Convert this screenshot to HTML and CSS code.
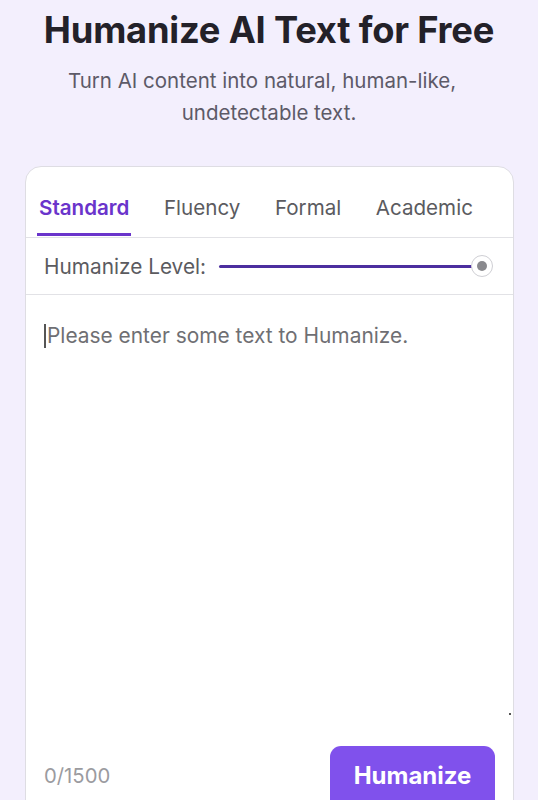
FILE: index.html
```html
<!DOCTYPE html>
<html>
<head>
<meta charset="utf-8">
<link rel="stylesheet" href="styles.css">
</head>
<body>
<header class="hero">
  <h1 class="title">Humanize AI Text for Free</h1>
  <p class="subtitle"><span class="sub-line">Turn AI content into natural, human-like,</span> undetectable text.</p>
</header>
<section class="card">
  <nav class="tabs">
    <span class="tab active">Standard</span>
    <span class="tab">Fluency</span>
    <span class="tab">Formal</span>
    <span class="tab">Academic</span>
  </nav>
  <div class="level">
    <span class="level-label">Humanize Level:</span>
    <div class="slider">
      <div class="track"></div>
      <div class="thumb"><div class="thumb-dot"></div></div>
    </div>
  </div>
  <div class="editor">
    <div class="placeholder"><span class="caret"></span>Please enter some text to Humanize.</div>
    <span class="resize-dot"></span>
  </div>
  <div class="footer">
    <span class="count">0/1500</span>
    <button class="btn">Humanize</button>
  </div>
</section>
</body>
</html>
```
FILE: styles.css
```css
html, body {
  margin: 0;
  padding: 0;
  background: #f3effd;
  font-family: Inter, "Noto Sans", sans-serif;
  height: 800px;
  overflow: hidden;
}
.hero {
  text-align: center;
  padding-top: 8px;
}
.title {
  margin: 0;
  font-size: 36.3px;
  font-weight: 700;
  color: #232129;
  line-height: 44px;
  letter-spacing: -0.2px;
}
.subtitle {
  margin: 13px auto 0;
  width: 430px;
  font-size: 20.5px;
  line-height: 32px;
  color: #5d5a68;
}
.sub-line {
  padding-right: 14px;
}
.card {
  margin: 37px 24px 0 25px;
  background: #fff;
  border: 1px solid #dedde3;
  border-radius: 16px;
  height: 700px;
  display: flex;
  flex-direction: column;
}
.tabs {
  display: flex;
  gap: 30.5px;
  padding: 28px 0 0 11px;
  border-bottom: 1px solid #e2e2e6;
}
.tab {
  font-size: 20.6px;
  line-height: 25px;
  color: #5b5b5f;
  padding: 0 2px 17px;
}
.tab.active {
  color: #6a34cb;
  font-weight: 600;
  border-bottom: 3px solid #6a34cb;
  padding-bottom: 13px;
  margin-bottom: 1px;
}
.level {
  display: flex;
  align-items: center;
  height: 56px;
  padding: 0 20px 0 18px;
  border-bottom: 1px solid #e2e2e6;
  gap: 13px;
}
.level-label {
  font-size: 20.8px;
  color: #5b5b5f;
}
.slider {
  flex: 1;
  position: relative;
  height: 22px;
  display: flex;
  align-items: center;
}
.track {
  flex: 1;
  height: 3px;
  background: #4c2e9f;
  border-radius: 2px;
  margin-right: 10px;
}
.thumb {
  position: absolute;
  right: 0;
  top: 0;
  width: 20px;
  height: 20px;
  border: 1px solid #cfcfd4;
  border-radius: 50%;
  background: #fff;
  display: flex;
  align-items: center;
  justify-content: center;
}
.thumb-dot {
  width: 10px;
  height: 10px;
  border-radius: 50%;
  background: #8a8a8e;
}
.editor {
  flex: 1;
  position: relative;
  padding: 28px 18px;
  max-height: 365px;
}
.placeholder {
  font-size: 20.9px;
  line-height: 25px;
  color: #6f6f73;
  display: flex;
  align-items: center;
}
.caret {
  display: inline-block;
  width: 2px;
  height: 24px;
  background: #555;
  margin-right: 1px;
}
.resize-dot {
  position: absolute;
  right: 2px;
  bottom: 1px;
  width: 2px;
  height: 2px;
  background: #555;
}
.footer {
  display: flex;
  justify-content: space-between;
  align-items: flex-start;
  padding: 30px 18px 0 18px;
}
.count {
  font-size: 20.3px;
  color: #9b9b9f;
  margin-top: 17px;
}
.btn {
  border: none;
  background: #8051ec;
  color: #fff;
  font-family: Inter, sans-serif;
  font-size: 24px;
  font-weight: 700;
  border-radius: 11px;
  width: 165px;
  height: 64px;
  padding: 0 0 6px;
}
```
